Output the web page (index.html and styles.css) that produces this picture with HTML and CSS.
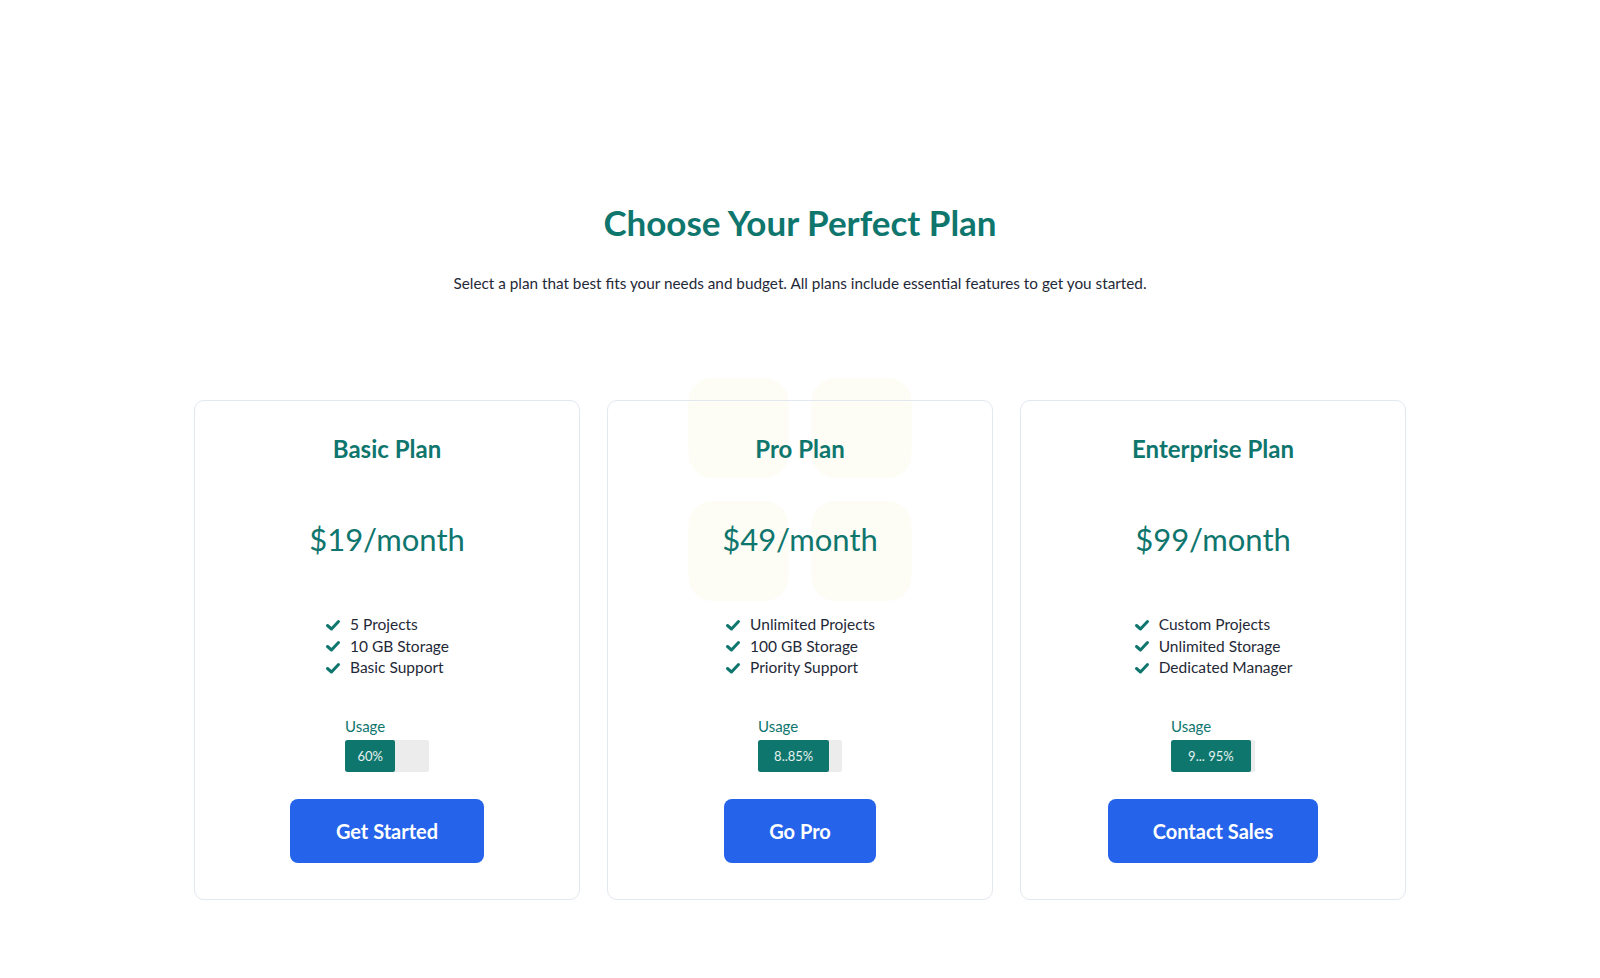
FILE: index.html
```
<!DOCTYPE html>
<html lang="en">
<head>
    <meta charset="UTF-8">
    <meta name="viewport" content="width=device-width, initial-scale=1.0">
    <title>Pricing</title>
    <link rel="stylesheet" href="styles.css">
</head>
<body>
    <section class="pricing">
        <h1>Choose Your Perfect Plan</h1>
        <p class="subtitle">Select a plan that best fits your needs and budget. All plans include essential features to get you started.</p>

        <div class="planos">
            <div class="decoracao">
                <span></span><span></span><span></span><span></span>
            </div>

            <div class="card">
                <h2>Basic Plan</h2>
                <div class="preco">$19/month</div>
                <ul class="features">
                    <li><svg viewBox="0 0 16 16"><polyline points="2.5,8.5 6.5,12 13.5,4.5"/></svg>5 Projects</li>
                    <li><svg viewBox="0 0 16 16"><polyline points="2.5,8.5 6.5,12 13.5,4.5"/></svg>10 GB Storage</li>
                    <li><svg viewBox="0 0 16 16"><polyline points="2.5,8.5 6.5,12 13.5,4.5"/></svg>Basic Support</li>
                </ul>
                <div class="uso">
                    <div class="uso-label">Usage</div>
                    <div class="barra"><div class="preenchido" style="width: 60%">60%</div></div>
                </div>
                <button class="btn btn-basic">Get Started</button>
            </div>

            <div class="card">
                <h2>Pro Plan</h2>
                <div class="preco">$49/month</div>
                <ul class="features">
                    <li><svg viewBox="0 0 16 16"><polyline points="2.5,8.5 6.5,12 13.5,4.5"/></svg>Unlimited Projects</li>
                    <li><svg viewBox="0 0 16 16"><polyline points="2.5,8.5 6.5,12 13.5,4.5"/></svg>100 GB Storage</li>
                    <li><svg viewBox="0 0 16 16"><polyline points="2.5,8.5 6.5,12 13.5,4.5"/></svg>Priority Support</li>
                </ul>
                <div class="uso">
                    <div class="uso-label">Usage</div>
                    <div class="barra"><div class="preenchido" style="width: 85%">8..85%</div></div>
                </div>
                <button class="btn btn-pro">Go Pro</button>
            </div>

            <div class="card">
                <h2>Enterprise Plan</h2>
                <div class="preco">$99/month</div>
                <ul class="features">
                    <li><svg viewBox="0 0 16 16"><polyline points="2.5,8.5 6.5,12 13.5,4.5"/></svg>Custom Projects</li>
                    <li><svg viewBox="0 0 16 16"><polyline points="2.5,8.5 6.5,12 13.5,4.5"/></svg>Unlimited Storage</li>
                    <li><svg viewBox="0 0 16 16"><polyline points="2.5,8.5 6.5,12 13.5,4.5"/></svg>Dedicated Manager</li>
                </ul>
                <div class="uso">
                    <div class="uso-label">Usage</div>
                    <div class="barra"><div class="preenchido" style="width: 95%">9...&nbsp;95%</div></div>
                </div>
                <button class="btn btn-enterprise">Contact Sales</button>
            </div>
        </div>
    </section>
</body>
</html>
```

FILE: styles.css
```
body {
    margin: 0;
    background: #ffffff;
    font-family: Lato, "Noto Sans", sans-serif;
    color: #1f2937;
}

.pricing {
    padding: 200px 0 60px;
    text-align: center;
}

h1 {
    margin: 0;
    font-size: 35px;
    line-height: 44px;
    font-weight: 700;
    color: #0f766e;
}

.subtitle {
    margin: 27px 0 0;
    font-size: 15.3px;
    line-height: 24px;
}

.planos {
    position: relative;
    display: grid;
    grid-template-columns: repeat(3, 386px);
    gap: 27px;
    justify-content: center;
    margin-top: 105px;
}

.decoracao {
    position: absolute;
    top: -22px;
    left: 50%;
    transform: translateX(-50%);
    display: grid;
    grid-template-columns: 100px 100px;
    gap: 23px;
    z-index: 0;
}

.decoracao span {
    width: 100px;
    height: 100px;
    border-radius: 24px;
    background: #fdfcf5;
}

.card {
    position: relative;
    z-index: 1;
    border: 1px solid #e2e8f0;
    border-radius: 10px;
    padding: 32px 20px 36px;
    display: flex;
    flex-direction: column;
    align-items: center;
}

.card h2 {
    margin: 0;
    font-size: 24px;
    line-height: 32px;
    font-weight: 700;
    color: #0f766e;
}

.preco {
    margin-top: 54px;
    font-size: 31px;
    line-height: 40px;
    color: #0f766e;
}

.features {
    list-style: none;
    margin: 55px 0 0;
    padding: 0;
    text-align: left;
}

.features li {
    display: flex;
    align-items: center;
    gap: 9px;
    font-size: 15.5px;
    line-height: 21.5px;
}

.features svg {
    width: 16px;
    height: 16px;
    fill: none;
    stroke: #0f766e;
    stroke-width: 3;
    stroke-linecap: round;
    stroke-linejoin: round;
}

.uso {
    margin-top: 37px;
    width: 84px;
    text-align: left;
}

.uso-label {
    font-size: 15px;
    line-height: 20px;
    color: #0f766e;
}

.barra {
    margin-top: 4px;
    height: 32px;
    background: #ececec;
    border-radius: 2px;
    overflow: hidden;
}

.preenchido {
    height: 100%;
    background: #0f766e;
    border-radius: 2px;
    color: #e6f2ef;
    font-size: 13px;
    line-height: 32px;
    text-align: center;
    white-space: nowrap;
    overflow: hidden;
}

.btn {
    margin-top: 27px;
    height: 64px;
    border: none;
    border-radius: 8px;
    background: #2563eb;
    color: #ffffff;
    font-family: inherit;
    font-size: 20px;
    font-weight: 700;
    cursor: pointer;
}

.btn-basic {
    width: 194px;
}

.btn-pro {
    width: 152px;
}

.btn-enterprise {
    width: 210px;
}
```
